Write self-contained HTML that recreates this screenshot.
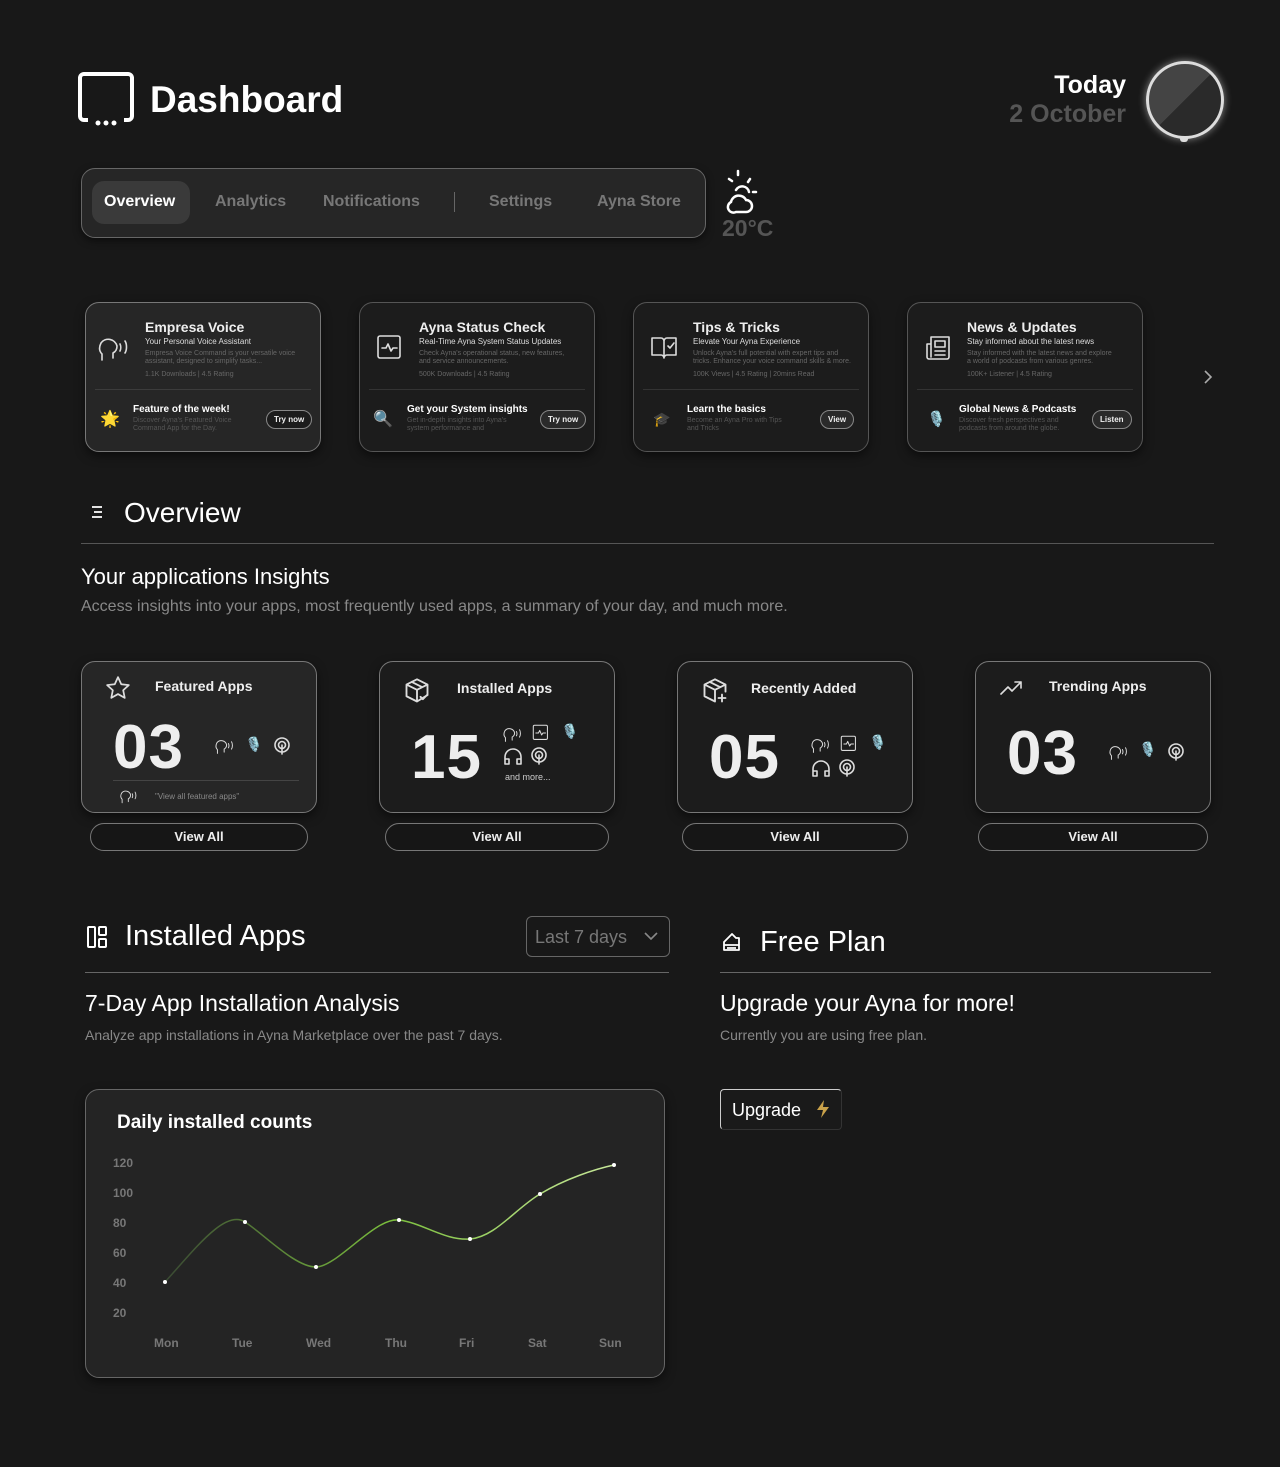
<!DOCTYPE html>
<html><head><meta charset="utf-8"><style>
*{box-sizing:border-box;margin:0;padding:0}
body{width:1280px;height:1467px;background:#181818;font-family:"Liberation Sans",sans-serif;color:#eee;position:relative;overflow:hidden}
.a{position:absolute}
.card{position:absolute;border-radius:14px;border:1.5px solid #555;background:#1c1c1c;box-shadow:0 4px 10px rgba(0,0,0,.5)}
.card.g{background:#262626;border-color:#777}
.t1{font-size:14px;font-weight:bold;color:#eee}
.t2{font-size:8px;color:#ddd}
.t3{font-size:7px;color:#666;line-height:8px}
.btn{position:absolute;border:1px solid #888;border-radius:12px;font-size:8px;font-weight:bold;padding:4px 7px;color:#eee;background:#1c1c1c}
.ic{stroke:#ddd;fill:none;stroke-width:1.6;stroke-linecap:round;stroke-linejoin:round}
.big{font-size:62px;font-weight:bold;color:#eee;letter-spacing:1px}
.va{position:absolute;height:28px;border:1px solid #777;border-radius:14px;text-align:center;font-size:13px;font-weight:bold;line-height:26px;background:#161616}
.sep{position:absolute;height:1px;background:#555}
</style></head><body>

<!-- header -->
<svg class="a" style="left:78px;top:72px" width="56" height="56" viewBox="0 0 56 56"><path d="M10 48H6a4 4 0 0 1-4-4V6a4 4 0 0 1 4-4h44a4 4 0 0 1 4 4v38a4 4 0 0 1-4 4h-4" stroke="#fff" stroke-width="4" fill="none"/><circle cx="20" cy="51" r="2.5" fill="#fff"/><circle cx="28" cy="51" r="2.5" fill="#fff"/><circle cx="36" cy="51" r="2.5" fill="#fff"/></svg>
<div class="a" style="left:150px;top:79px;font-size:37px;font-weight:bold;color:#fff">Dashboard</div>
<div class="a" style="right:154px;top:71px;font-size:25px;font-weight:bold;color:#fff">Today</div>
<div class="a" style="right:154px;top:100px;font-size:25px;font-weight:bold;color:#555">2 October</div>
<div class="a" style="left:1146px;top:61px;width:78px;height:78px;border-radius:50%;border:3px solid #ddd;box-shadow:0 0 8px rgba(255,255,255,.5);background:conic-gradient(from 45deg,#2a2a2a 0 180deg,#444 180deg 360deg)"></div>
<div class="a" style="left:1180px;top:136px;width:8px;height:6px;border-radius:3px;background:#ddd"></div>

<!-- nav -->
<div class="a" style="left:81px;top:168px;width:625px;height:70px;border-radius:14px;border:1.5px solid #666;background:#262626;box-shadow:0 3px 8px rgba(0,0,0,.5)"></div>
<div class="a" style="left:92px;top:181px;width:98px;height:43px;border-radius:12px;background:#3a3a3a"></div>
<div class="a" style="left:104px;top:193px;font-size:16px;font-weight:bold;color:#fff">Overview</div>
<div class="a" style="left:215px;top:193px;font-size:16px;font-weight:bold;color:#777">Analytics</div>
<div class="a" style="left:323px;top:193px;font-size:16px;font-weight:bold;color:#777">Notifications</div>
<div class="a" style="left:454px;top:192px;width:1px;height:20px;background:#666"></div>
<div class="a" style="left:489px;top:193px;font-size:16px;font-weight:bold;color:#777">Settings</div>
<div class="a" style="left:597px;top:193px;font-size:16px;font-weight:bold;color:#777">Ayna Store</div>
<svg class="a" style="left:726px;top:168px" width="48" height="48" viewBox="0 0 48 48"><g stroke="#fff" stroke-width="2.5" fill="none" stroke-linecap="round"><path d="M12 3v4M3 11l3 2M24 11l-2 3M27 24h3M10 22a7 7 0 0 1 13 2"/><path d="M10 44h10a6 6 0 0 0 0-12 8 8 0 0 0-15 2 5 5 0 0 0 5 10z"/></g></svg>
<div class="a" style="left:722px;top:215px;font-size:23px;font-weight:bold;color:#555">20°C</div>

<!-- feature cards -->
<div class="card g" style="left:85px;top:302px;width:236px;height:150px"></div>
<div class="card" style="left:359px;top:302px;width:236px;height:150px"></div>
<div class="card" style="left:633px;top:302px;width:236px;height:150px"></div>
<div class="card" style="left:907px;top:302px;width:236px;height:150px"></div>

<!-- card 1 -->
<svg class="a" style="left:98px;top:332px" width="36" height="32" viewBox="0 0 36 32"><path class="ic" stroke-width="2" d="M4 28v-6c-3-3-3-7-1-11a9 9 0 0 1 16 3c0 4-2 6-4 7v5M22 12c1 2 1 5 0 7M27 9c2 3 2 9 0 12"/></svg>
<div class="a t1" style="left:145px;top:319px">Empresa Voice</div>
<div class="a t2" style="left:145px;top:337px">Your Personal Voice Assistant</div>
<div class="a t3" style="left:145px;top:350px">Empresa Voice Command is your versatile voice<br>assistant, designed to simplify tasks...</div>
<div class="a t3" style="left:145px;top:371px">1.1K Downloads | 4.5 Rating</div>
<div class="sep" style="left:95px;top:389px;width:216px;background:#3c3c3c"></div>
<div class="a" style="left:100px;top:409px;font-size:16px">🌟</div>
<div class="a" style="left:133px;top:404px;font-size:10px;font-weight:bold;color:#fff">Feature of the week!</div>
<div class="a t3" style="left:133px;top:417px;color:#555">Discover Ayna's Featured Voice<br>Command App for the Day.</div>
<div class="btn" style="left:266px;top:410px">Try now</div>

<!-- card 2 -->
<svg class="a" style="left:376px;top:334px" width="28" height="28" viewBox="0 0 28 28"><rect class="ic" x="2" y="2" width="22" height="22" rx="2" stroke-width="2"/><path class="ic" d="M6 14h4l2-4 3 7 2-3h4"/></svg>
<div class="a t1" style="left:419px;top:319px">Ayna Status Check</div>
<div class="a t2" style="left:419px;top:337px">Real-Time Ayna System Status Updates</div>
<div class="a t3" style="left:419px;top:350px">Check Ayna's operational status, new features,<br>and service announcements.</div>
<div class="a t3" style="left:419px;top:371px">500K Downloads | 4.5 Rating</div>
<div class="sep" style="left:369px;top:389px;width:216px;background:#333"></div>
<div class="a" style="left:373px;top:409px;font-size:16px">🔍</div>
<div class="a" style="left:407px;top:404px;font-size:10px;font-weight:bold;color:#fff">Get your System insights</div>
<div class="a t3" style="left:407px;top:417px;color:#555">Get in-depth insights into Ayna's<br>system performance and</div>
<div class="btn" style="left:540px;top:410px;background:#2a2a2a">Try now</div>

<!-- card 3 -->
<svg class="a" style="left:650px;top:334px" width="28" height="26" viewBox="0 0 28 26"><path class="ic" d="M2 4h9a3 3 0 0 1 3 3v17a3 3 0 0 0-3-3H2zM26 4h-9a3 3 0 0 0-3 3v17a3 3 0 0 1 3-3h9z"/><path class="ic" d="M18 12l2 2 4-5"/></svg>
<div class="a t1" style="left:693px;top:319px">Tips &amp; Tricks</div>
<div class="a t2" style="left:693px;top:337px">Elevate Your Ayna Experience</div>
<div class="a t3" style="left:693px;top:350px">Unlock Ayna's full potential with expert tips and<br>tricks. Enhance your voice command skills &amp; more.</div>
<div class="a t3" style="left:693px;top:371px">100K Views | 4.5 Rating | 20mins Read</div>
<div class="sep" style="left:643px;top:389px;width:216px;background:#333"></div>
<div class="a" style="left:653px;top:411px;font-size:14px">🎓</div>
<div class="a" style="left:687px;top:404px;font-size:10px;font-weight:bold;color:#fff">Learn the basics</div>
<div class="a t3" style="left:687px;top:417px;color:#555">Become an Ayna Pro with Tips<br>and Tricks</div>
<div class="btn" style="left:820px;top:410px;background:#2a2a2a">View</div>

<!-- card 4 -->
<svg class="a" style="left:924px;top:334px" width="28" height="28" viewBox="0 0 28 28"><path class="ic" d="M7 3h18v20a2 2 0 0 1-2 2H5a2 2 0 0 1-2-2V10h4zM7 10v13M11 7h10v6H11zM11 17h10M11 21h10"/></svg>
<div class="a t1" style="left:967px;top:319px">News &amp; Updates</div>
<div class="a t2" style="left:967px;top:337px">Stay informed about the latest news</div>
<div class="a t3" style="left:967px;top:350px">Stay informed with the latest news and explore<br>a world of podcasts from various genres.</div>
<div class="a t3" style="left:967px;top:371px">100K+ Listener | 4.5 Rating</div>
<div class="sep" style="left:917px;top:389px;width:216px;background:#333"></div>
<div class="a" style="left:927px;top:410px;font-size:15px">🎙️</div>
<div class="a" style="left:959px;top:404px;font-size:10px;font-weight:bold;color:#fff">Global News &amp; Podcasts</div>
<div class="a t3" style="left:959px;top:417px;color:#555">Discover fresh perspectives and<br>podcasts from around the globe.</div>
<div class="btn" style="left:1092px;top:410px;background:#2a2a2a">Listen</div>
<svg class="a" style="left:1202px;top:369px" width="12" height="16" viewBox="0 0 12 16"><path d="M3 2l6 6-6 6" stroke="#aaa" stroke-width="1.6" fill="none"/></svg>

<!-- overview -->
<svg class="a" style="left:90px;top:504px" width="16" height="16" viewBox="0 0 16 16"><path d="M2 3h10M4 8h8M2 13h10" stroke="#fff" stroke-width="1.8"/></svg>
<div class="a" style="left:124px;top:497px;font-size:28px;color:#fff">Overview</div>
<div class="sep" style="left:81px;top:543px;width:1133px"></div>
<div class="a" style="left:81px;top:564px;font-size:22px;color:#fff">Your applications Insights</div>
<div class="a" style="left:81px;top:598px;font-size:16px;color:#888">Access insights into your apps, most frequently used apps, a summary of your day, and much more.</div>

<!-- insight cards -->
<div class="card g" style="left:81px;top:661px;width:236px;height:152px"></div>
<div class="card" style="left:379px;top:661px;width:236px;height:152px;border-color:#777"></div>
<div class="card" style="left:677px;top:661px;width:236px;height:152px;border-color:#777"></div>
<div class="card" style="left:975px;top:661px;width:236px;height:152px;border-color:#777"></div>

<svg class="a" style="left:105px;top:675px" width="26" height="26" viewBox="0 0 24 24"><path class="ic" d="M12 2l3 6.5 7 .8-5.2 4.8 1.4 7L12 17.6 5.8 21.1l1.4-7L2 9.3l7-.8z"/></svg>
<div class="a" style="left:155px;top:678px;font-size:14px;font-weight:bold">Featured Apps</div>
<div class="a big" style="left:113px;top:712px">03</div>
<svg class="a" style="left:215px;top:736px" width="22" height="20" viewBox="0 0 36 32"><path class="ic" stroke-width="2.4" d="M4 28v-6c-3-3-3-7-1-11a9 9 0 0 1 16 3c0 4-2 6-4 7v5M22 12c1 2 1 5 0 7M27 9c2 3 2 9 0 12"/></svg>
<div class="a" style="left:245px;top:736px;font-size:14px">🎙️</div>
<svg class="a" style="left:273px;top:737px" width="18" height="18" viewBox="0 0 18 18"><circle class="ic" cx="9" cy="8" r="7"/><circle class="ic" cx="9" cy="8" r="3.5"/><path class="ic" d="M9 8v9"/></svg>
<div class="sep" style="left:113px;top:780px;width:186px;background:#444"></div>
<svg class="a" style="left:119px;top:787px" width="22" height="18" viewBox="0 0 36 32"><path class="ic" stroke-width="2.4" d="M4 28v-6c-3-3-3-7-1-11a9 9 0 0 1 16 3c0 4-2 6-4 7v5M22 12c1 2 1 5 0 7M27 9c2 3 2 9 0 12"/></svg>
<div class="a" style="left:155px;top:792px;font-size:8px;color:#888">"View all featured apps"</div>

<svg class="a" style="left:403px;top:677px" width="28" height="28" viewBox="0 0 24 24"><path class="ic" d="M12 2l9 4.5v9L12 21 3 16.5v-10zM3 6.5L12 11l9-4.5M12 11v10M7.5 4.2l9 4.5M15 17l2 2 4-4"/></svg>
<div class="a" style="left:457px;top:680px;font-size:14px;font-weight:bold">Installed Apps</div>
<div class="a big" style="left:411px;top:722px">15</div>
<svg class="a" style="left:503px;top:724px" width="22" height="20" viewBox="0 0 36 32"><path class="ic" stroke-width="2.4" d="M4 28v-6c-3-3-3-7-1-11a9 9 0 0 1 16 3c0 4-2 6-4 7v5M22 12c1 2 1 5 0 7M27 9c2 3 2 9 0 12"/></svg>
<svg class="a" style="left:532px;top:724px" width="18" height="18" viewBox="0 0 28 28"><rect class="ic" x="2" y="2" width="22" height="22" rx="2" stroke-width="2"/><path class="ic" d="M6 14h4l2-4 3 7 2-3h4"/></svg>
<div class="a" style="left:561px;top:723px;font-size:14px">🎙️</div>
<svg class="a" style="left:503px;top:747px" width="20" height="18" viewBox="0 0 20 18"><path class="ic" d="M2 16v-6a8 8 0 0 1 16 0v6M2 12h4v5H2zM14 12h4v5h-4z"/></svg>
<svg class="a" style="left:530px;top:747px" width="18" height="18" viewBox="0 0 18 18"><circle class="ic" cx="9" cy="8" r="7"/><circle class="ic" cx="9" cy="8" r="3.5"/><path class="ic" d="M9 8v9"/></svg>
<div class="a" style="left:505px;top:772px;font-size:9px;color:#ccc">and more...</div>

<svg class="a" style="left:701px;top:677px" width="28" height="28" viewBox="0 0 24 24"><path class="ic" d="M12 2l9 4.5v6M12 21L3 16.5v-10L12 2M3 6.5L12 11l9-4.5M12 11v10M7.5 4.2l9 4.5M18 15v6M15 18h6"/></svg>
<div class="a" style="left:751px;top:680px;font-size:14px;font-weight:bold">Recently Added</div>
<div class="a big" style="left:709px;top:722px">05</div>
<svg class="a" style="left:811px;top:735px" width="22" height="20" viewBox="0 0 36 32"><path class="ic" stroke-width="2.4" d="M4 28v-6c-3-3-3-7-1-11a9 9 0 0 1 16 3c0 4-2 6-4 7v5M22 12c1 2 1 5 0 7M27 9c2 3 2 9 0 12"/></svg>
<svg class="a" style="left:840px;top:735px" width="18" height="18" viewBox="0 0 28 28"><rect class="ic" x="2" y="2" width="22" height="22" rx="2" stroke-width="2"/><path class="ic" d="M6 14h4l2-4 3 7 2-3h4"/></svg>
<div class="a" style="left:869px;top:734px;font-size:14px">🎙️</div>
<svg class="a" style="left:811px;top:759px" width="20" height="18" viewBox="0 0 20 18"><path class="ic" d="M2 16v-6a8 8 0 0 1 16 0v6M2 12h4v5H2zM14 12h4v5h-4z"/></svg>
<svg class="a" style="left:838px;top:759px" width="18" height="18" viewBox="0 0 18 18"><circle class="ic" cx="9" cy="8" r="7"/><circle class="ic" cx="9" cy="8" r="3.5"/><path class="ic" d="M9 8v9"/></svg>

<svg class="a" style="left:999px;top:678px" width="26" height="20" viewBox="0 0 26 20"><path class="ic" d="M2 16l7-7 4 4 9-9M16 4h6v6"/></svg>
<div class="a" style="left:1049px;top:678px;font-size:14px;font-weight:bold">Trending Apps</div>
<div class="a big" style="left:1007px;top:718px">03</div>
<svg class="a" style="left:1109px;top:742px" width="22" height="20" viewBox="0 0 36 32"><path class="ic" stroke-width="2.4" d="M4 28v-6c-3-3-3-7-1-11a9 9 0 0 1 16 3c0 4-2 6-4 7v5M22 12c1 2 1 5 0 7M27 9c2 3 2 9 0 12"/></svg>
<div class="a" style="left:1139px;top:741px;font-size:14px">🎙️</div>
<svg class="a" style="left:1167px;top:743px" width="18" height="18" viewBox="0 0 18 18"><circle class="ic" cx="9" cy="8" r="7"/><circle class="ic" cx="9" cy="8" r="3.5"/><path class="ic" d="M9 8v9"/></svg>

<div class="va" style="left:90px;top:823px;width:218px">View All</div>
<div class="va" style="left:385px;top:823px;width:224px">View All</div>
<div class="va" style="left:682px;top:823px;width:226px">View All</div>
<div class="va" style="left:978px;top:823px;width:230px">View All</div>

<!-- installed apps section -->
<svg class="a" style="left:86px;top:925px" width="22" height="24" viewBox="0 0 22 24"><g stroke="#fff" stroke-width="2" fill="none"><rect x="2" y="2" width="7" height="20" rx="1"/><rect x="13" y="2" width="7" height="8" rx="1"/><rect x="13" y="14" width="7" height="8" rx="1"/></g></svg>
<div class="a" style="left:125px;top:920px;font-size:29px;color:#fff">Installed Apps</div>
<div class="a" style="left:526px;top:916px;width:144px;height:41px;border:1.5px solid #666;border-radius:6px"></div>
<div class="a" style="left:535px;top:927px;font-size:18px;color:#777">Last 7 days</div>
<svg class="a" style="left:643px;top:930px" width="16" height="12" viewBox="0 0 16 12"><path d="M2 3l6 6 6-6" stroke="#888" stroke-width="1.6" fill="none"/></svg>
<div class="sep" style="left:85px;top:972px;width:584px;background:#666"></div>
<div class="a" style="left:85px;top:990px;font-size:23px;color:#fff">7-Day App Installation Analysis</div>
<div class="a" style="left:85px;top:1027px;font-size:14px;color:#888">Analyze app installations in Ayna Marketplace over the past 7 days.</div>

<!-- chart -->
<div class="card g" style="left:85px;top:1089px;width:580px;height:289px;background:#242424;border-color:#666"></div>
<div class="a" style="left:117px;top:1112px;font-size:19px;font-weight:bold;color:#fff">Daily installed counts</div>
<svg class="a" style="left:85px;top:1089px" width="580" height="289">
<g font-family="Liberation Sans,sans-serif" font-size="12" font-weight="bold" fill="#777">
<text x="28" y="78">120</text><text x="28" y="108">100</text><text x="28" y="138">80</text><text x="28" y="168">60</text><text x="28" y="198">40</text><text x="28" y="228">20</text>
<text x="69" y="258">Mon</text><text x="147" y="258">Tue</text><text x="221" y="258">Wed</text><text x="300" y="258">Thu</text><text x="374" y="258">Fri</text><text x="443" y="258">Sat</text><text x="514" y="258">Sun</text></g>
<defs><linearGradient id="lg" x1="0" x2="1"><stop offset="0" stop-color="#3a4a33"/><stop offset="0.5" stop-color="#7bbf3d"/><stop offset="1" stop-color="#c8e89a"/></linearGradient></defs>
<path d="M80 193C110 160 140 120 160 133S210 178 231 178S290 128 314 131S360 152 385 150S430 120 455 105S510 80 529 76" stroke="url(#lg)" stroke-width="1.5" fill="none"/>
<g fill="#fff"><circle cx="80" cy="193" r="2"/><circle cx="160" cy="133" r="2"/><circle cx="231" cy="178" r="2"/><circle cx="314" cy="131" r="2"/><circle cx="385" cy="150" r="2"/><circle cx="455" cy="105" r="2"/><circle cx="529" cy="76" r="2"/></g>
</svg>

<!-- free plan -->
<svg class="a" style="left:721px;top:931px" width="22" height="22" viewBox="0 0 22 22"><path d="M3 19V11l8-8 4 4 3 0v12zM3 14h15M6 17h9" stroke="#fff" stroke-width="1.8" fill="none" stroke-linejoin="round"/></svg>
<div class="a" style="left:760px;top:926px;font-size:29px;color:#fff">Free Plan</div>
<div class="sep" style="left:720px;top:972px;width:491px;background:#666"></div>
<div class="a" style="left:720px;top:990px;font-size:23px;color:#fff">Upgrade your Ayna for more!</div>
<div class="a" style="left:720px;top:1027px;font-size:14px;color:#888">Currently you are using free plan.</div>
<div class="a" style="left:720px;top:1089px;width:122px;height:41px;border:1.5px solid #ccc;border-right-color:#333;border-bottom-color:#333;border-radius:4px;background:#1a1a1a"></div>
<div class="a" style="left:732px;top:1100px;font-size:18px;color:#fff">Upgrade</div>
<svg class="a" style="left:814px;top:1099px" width="18" height="20" viewBox="0 0 18 20"><path d="M10 1L3 11h6l-2 8 8-11H9z" fill="#c9a24a"/></svg>
</body></html>
